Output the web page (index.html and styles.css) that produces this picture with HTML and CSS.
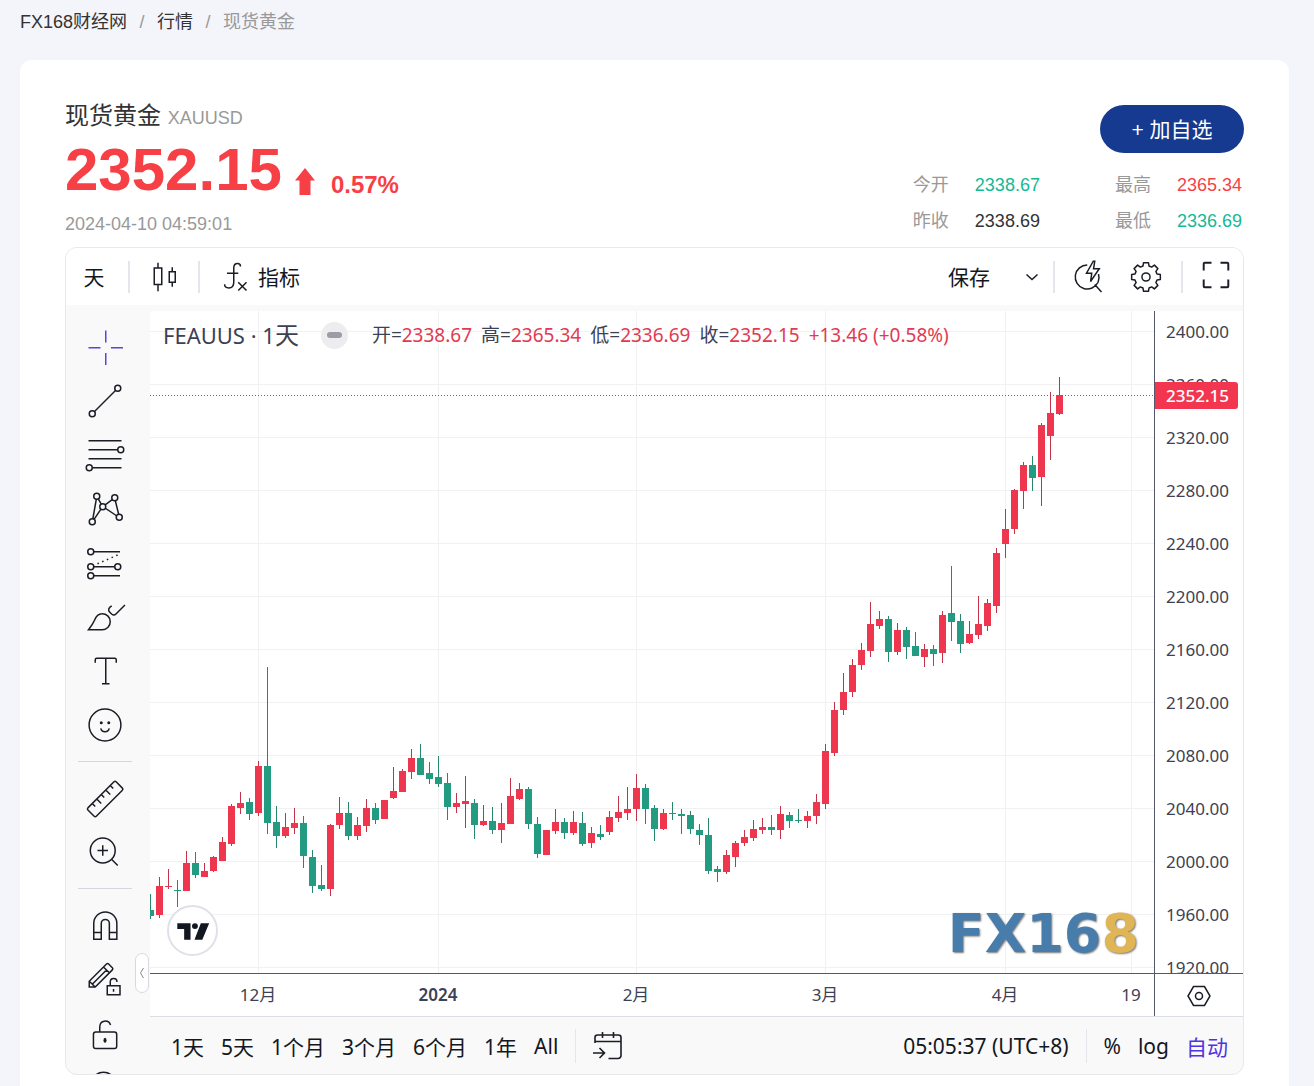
FILE: index.html
```html
<!DOCTYPE html>
<html lang="zh-CN">
<head>
<meta charset="utf-8">
<title>现货黄金 XAUUSD</title>
<link rel="stylesheet" href="styles.css">
</head>
<body>
<div class="page">
  <nav class="crumbs" aria-label="breadcrumb">
    <a href="#">FX168财经网</a><span class="crumb-sep">/</span><a href="#">行情</a><span class="crumb-sep">/</span><span class="crumb-current">现货黄金</span>
  </nav>

  <main class="card">
    <header class="quote">
      <div class="quote-main">
        <h1 class="quote-title">现货黄金 <span class="quote-code">XAUUSD</span></h1>
        <div class="quote-price">
          <span class="price">2352.15</span>
          <svg class="arrow" viewBox="0 0 20 27" aria-hidden="true"><path d="M10 0 20 12.500H15.500V27H4.500V12.500H0Z"/></svg>
          <span class="change">0.57%</span>
        </div>
        <time class="quote-time">2024-04-10 04:59:01</time>
      </div>
      <div class="quote-side">
        <button class="add-btn" type="button">+ 加自选</button>
        <dl class="stats">
          <dt>今开</dt><dd class="down">2338.67</dd><dt class="second">最高</dt><dd class="up">2365.34</dd>
          <dt>昨收</dt><dd>2338.69</dd><dt class="second">最低</dt><dd class="down">2336.69</dd>
        </dl>
      </div>
    </header>

    <section class="widget">
      <div class="topbar">
        <button class="tb-btn interval" type="button">天</button>
        <span class="vline"></span>
        <button class="tb-btn style" type="button" aria-label="K线图"><svg class="icon" viewBox="0 0 28 28"><path d="M7.500 8v11h5V8zM10 8V4.500M10 19v4.500M17.500 10.500v7h4v-7zM19.500 10.500v-3M19.500 17.500v3"/></svg></button>
        <span class="vline"></span>
        <button class="tb-btn indicators" type="button"><svg class="icon" viewBox="0 0 28 28"><path d="M19 7c0-1.300-.8-2-2-2-1.600 0-2.500 1.200-2.500 3v9.500c0 2.500-1 3.800-3.300 3.800-1.900 0-2.800-1-2.800-2.400M10 11.500h7.500M17.500 17.500l5.500 5.500M23 17.500l-5.500 5.500"/></svg><span>指标</span></button>
        <span class="spacer"></span>
        <button class="tb-btn save" type="button">保存</button>
        <button class="tb-btn more" type="button" aria-label="更多"><svg class="chevron" viewBox="0 0 14 8"><path d="M1.500 1.500 7 6.500l5.500-5"/></svg></button>
        <span class="vline"></span>
        <button class="tb-btn quick" type="button" aria-label="快速搜索"><svg class="icon" viewBox="0 0 28 28"><path d="M13.500 6A8 8 0 1 0 20.700 17.500 8 8 0 0 0 21 12M18.500 19l4.500 5M17.500 3.500l-4.500 8h3.500l-.8 5.500 5.800-8.500h-3.800l.8-5z"/></svg></button>
        <button class="tb-btn settings" type="button" aria-label="设置"><svg class="icon" viewBox="0 0 28 28"><g id="gear"></g></svg></button>
        <span class="vline"></span>
        <button class="tb-btn full" type="button" aria-label="全屏"><svg class="icon bold" viewBox="0 0 28 28"><path d="M11 5.800H6.500a.7.700 0 0 0-.7.700V11M17 5.800h4.500a.7.700 0 0 1 .7.700V11M11 22.200H6.500a.7.700 0 0 1-.7-.7V17M17 22.200h4.500a.7.700 0 0 0 .7-.7V17"/></svg></button>
      </div>

      <div class="body">
        <aside class="tools">
          <div class="tool-list">
            <button class="tool active" type="button" aria-label="光标"><svg class="icon" viewBox="0 0 28 28"><path d="M3 14.500h8M18 14.500h8M14.500 3v8M14.500 18v8"/></svg></button>
            <button class="tool" type="button" aria-label="趋势线"><svg class="icon" viewBox="0 0 28 28"><circle cx="5.500" cy="22.500" r="2"/><circle cx="22.500" cy="5.500" r="2"/><path d="M7 21 21 7"/></svg></button>
            <button class="tool" type="button" aria-label="斐波那契"><svg class="icon" viewBox="0 0 28 28"><path d="M3 4.500h22M3 10.500h19.500M3 16.500h22M5.500 22.500H25"/><circle cx="24.500" cy="10.500" r="2"/><circle cx="3.500" cy="22.500" r="2"/></svg></button>
            <button class="tool" type="button" aria-label="形态"><svg class="icon" viewBox="0 0 28 28"><circle cx="5.500" cy="22.500" r="2"/><circle cx="8.500" cy="5.500" r="2"/><circle cx="12.500" cy="12.500" r="2"/><circle cx="20.500" cy="6.500" r="2"/><circle cx="23.500" cy="19.500" r="2"/><path d="M5.900 20.500 8.200 7.500M6.700 20.900l4.600-6.800M9.500 7.200l2 3.500M14.100 11.300l4.700-3.500M20.900 8.500l2.200 9M14.200 13.500l7.500 5"/></svg></button>
            <button class="tool" type="button" aria-label="预测"><svg class="icon" viewBox="0 0 28 28"><circle cx="4.500" cy="6.500" r="2"/><circle cx="4.500" cy="16.500" r="2"/><circle cx="22.500" cy="16.500" r="2"/><circle cx="4.500" cy="22.500" r="2"/><path d="M6.500 6.500H24M6.500 16.500h14M6.500 22.500H24"/><path class="dots" d="M9 14.500l15-6.500"/></svg></button>
            <button class="tool" type="button" aria-label="画笔"><svg class="icon" viewBox="0 0 28 28"><path d="M3 22.500C5 20 6 18.500 7 16.200c1-2.700 2.500-4.400 5-4.400a5.350 5.350 0 0 1 .3 10.700zM27.300 6l-6 6c-.9.900-2 .8-2.900 0l-1.200-1.200c-1.500-1.500-.7-3 1.300-4.200"/></svg></button>
            <button class="tool" type="button" aria-label="文字"><svg class="icon" viewBox="0 0 28 28"><path d="M7.500 8.500v-2a1 1 0 0 1 1-1h12a1 1 0 0 1 1 1v2M14.500 5.500v17M12 22.500h5"/></svg></button>
            <button class="tool" type="button" aria-label="表情"><svg class="icon" viewBox="0 0 28 28"><circle cx="14" cy="14" r="10.600"/><path d="M11.200 16.300c.3 1.400 1.400 2.200 2.800 2.200s2.500-.8 2.800-2.200"/><circle class="fill" cx="11.500" cy="12.500" r="1"/><circle class="fill" cx="16.500" cy="12.500" r="1"/></svg></button>
            <hr class="tool-sep">
            <button class="tool" type="button" aria-label="测量"><svg class="icon" viewBox="0 0 28 28"><path d="M2.600 20.600 20 3.200a1 1 0 0 1 1.400 0l4.200 4.200a1 1 0 0 1 0 1.400L8.200 26.200a1 1 0 0 1-1.400 0L2.600 22a1 1 0 0 1 0-1.400zM5.500 17.700l2 2M8.500 14.700l3 3M11.500 11.700l2 2M14.500 8.700l3 3M17.500 5.700l2 2"/></svg></button>
            <button class="tool" type="button" aria-label="放大"><svg class="icon" viewBox="0 0 28 28"><circle cx="12.500" cy="13" r="8.300"/><path d="M9 13h7M12.500 9.500v7M18.500 19l4 4"/></svg></button>
            <hr class="tool-sep">
            <button class="tool" type="button" aria-label="磁铁"><svg class="icon" viewBox="0 0 28 28"><path d="M6.500 23.500V13a7.700 7.700 0 0 1 15.400 0v10.500h-5V13a2.700 2.700 0 0 0-5.400 0v10.500zM6.500 19h5M16.900 19h5"/></svg></button>
            <button class="tool" type="button" aria-label="绘图模式"><svg class="icon" viewBox="0 0 28 28"><path d="M3.500 19.300v-3.800L15 4a1 1 0 0 1 1.400 0l2.500 2.500a1 1 0 0 1 0 1.400L7.500 19.300zM3.500 15.500l4 3.800M13 6l4 4M5.500 17.500 15 8M15.500 18.500H24v6h-8.500zM17.500 18.500V16c0-3.200 4.500-3.200 4.500 0M19.700 20.700v1.800"/></svg></button>
            <button class="tool" type="button" aria-label="锁定"><svg class="icon" viewBox="0 0 28 28"><rect x="6.300" y="13.300" width="15.500" height="11" rx="1.500"/><path d="M10.500 13.300V10c0-5 6-5 7.200-1.300"/><ellipse class="fill" cx="14" cy="18.800" rx="1" ry="1.700"/></svg></button>
            <button class="tool" type="button" aria-label="隐藏"><svg class="icon" viewBox="0 0 28 28"><circle cx="13" cy="12.500" r="8.300"/></svg></button>
          </div>
          <button class="collapse" type="button" aria-label="收起"><svg viewBox="0 0 6 12"><path d="M4.500 1 1.500 6l3 5"/></svg></button>
        </aside>

        <div class="chart-col">
          <div class="chart">
            <div class="plot">
              <svg class="plot-svg" id="plot" viewBox="0 0 1004 706" preserveAspectRatio="xMaxYMin slice" role="img" aria-label="日线图"></svg>
              <div class="legend">
                <span class="symbol">FEAUUS · 1<span class="unit">天</span></span>
                <span class="badge"></span>
                <span class="ohlc">
                  <span>开=<b>2338.67</b></span><span>高=<b>2365.34</b></span><span>低=<b>2336.69</b></span><span>收=<b>2352.15</b></span><b>+13.46 (+0.58%)</b>
                </span>
              </div>
              <a class="tv-logo" href="#" aria-label="TradingView"><svg viewBox="0 0 52 52"><circle cx="26" cy="26" r="25"/><path d="M10.500 18.500h13.500v17h-6.500V24.500h-7zM34.500 18.500h8.500l-7 17h-8z"/><circle class="dot" cx="28.500" cy="21.500" r="3"/></svg></a>
              <div class="watermark">FX16<span>8</span></div>
            </div>
            <div class="price-axis">
              <ul class="prices">
                <li>2400.00</li><li>2360.00</li><li>2320.00</li><li>2280.00</li><li>2240.00</li><li>2200.00</li><li>2160.00</li><li>2120.00</li><li>2080.00</li><li>2040.00</li><li>2000.00</li><li>1960.00</li><li>1920.00</li>
              </ul>
              <span class="last-tag">2352.15</span>
              <button class="axis-settings" type="button" aria-label="坐标设置"><svg viewBox="0 0 24 22"><path d="M6.500 1.500h11L23 11l-5.500 9.500h-11L1 11z"/><circle cx="12" cy="11" r="3.500"/></svg></button>
            </div>
          </div>

          <div class="bottombar">
            <button type="button">1天</button><button type="button">5天</button><button type="button">1个月</button><button type="button">3个月</button><button type="button">6个月</button><button type="button">1年</button><button type="button">All</button>
            <span class="vline"></span>
            <button type="button" aria-label="前往日期"><svg class="goto" viewBox="0 0 30 30"><path d="M2 12V6.500A2.500 2.500 0 0 1 4.500 4h21A2.500 2.500 0 0 1 28 6.500v18a3 3 0 0 1-3 3H15.500M2 10.500h26M9.500 1v6M20.500 1v6M0 22h11M6.500 17l5 5-5 5"/></svg></button>
            <span class="spacer"></span>
            <button type="button" class="clock">05:05:37 (UTC+8)</button>
            <span class="vline"></span>
            <button type="button">%</button><button type="button">log</button><button type="button" class="auto">自动</button>
          </div>
        </div>
      </div>
    </section>
  </main>
</div>
<script src="chart.js"></script>
</body>
</html>
```
FILE: styles.css
```css
* { box-sizing: border-box; }
body {
  margin: 0;
  background: #f4f4fb;
  color: #333;
  font-family: "Liberation Sans", "Noto Sans CJK SC", sans-serif;
  font-size: 18px;
}
button {
  margin: 0;
  padding: 0;
  border: 0;
  background: none;
  color: inherit;
  font: inherit;
  cursor: pointer;
}
svg { display: block; }
.page {
  display: flex;
  flex-direction: column;
  min-height: 100vh;
  padding: 0 25px 0 20px;
}
.crumbs {
  display: flex;
  align-items: center;
  gap: 12px;
  height: 44px;
  margin-bottom: 16px;
  line-height: 44px;
}
.crumbs a { color: #333; text-decoration: none; }
.crumb-sep, .crumb-current { color: #999; }
.crumb-sep { width: 6px; text-align: center; }
.card {
  flex: 1;
  padding: 40px 45px 11px;
  border-radius: 12px 12px 0 0;
  background: #fff;
}

/* quote header */
.quote {
  display: flex;
  justify-content: space-between;
  height: 147px;
}
.quote-title {
  margin: 0;
  font-size: 24px;
  font-weight: 400;
  line-height: 32px;
}
.quote-code { color: #999; font-size: 18px; }
.quote-price {
  display: flex;
  align-items: flex-end;
  height: 66px;
  color: #f73f46;
  font-weight: 700;
}
.price { font-size: 60px; line-height: 60px; }
.arrow { width: 20px; height: 27px; margin: 0 16px 5px 13px; fill: #f73f46; }
.change { font-size: 24px; line-height: 32px; margin-bottom: -1px; }
.quote-time {
  display: block;
  margin-top: 12px;
  color: #999;
  line-height: 24px;
}
.quote-side {
  display: flex;
  flex-direction: column;
  align-items: flex-end;
  padding-top: 5px;
}
.add-btn {
  width: 144px;
  height: 48px;
  padding-bottom: 3px;
  border-radius: 24px;
  background: #163a8f;
  color: #fff;
  font-size: 21px;
}
.stats {
  display: grid;
  grid-template-columns: auto auto auto auto;
  column-gap: 26px;
  margin: 14px 2px 0 0;
  line-height: 36px;
}
.stats dt { color: #999; }
.stats dt.second { padding-left: 49px; }
.stats dd { margin: 0; }
.stats .up { color: #f73f46; }
.stats .down { color: #15b993; }

/* chart widget */
.widget {
  overflow: hidden;
  border: 1px solid #e8e8ec;
  border-radius: 12px;
  background: #f9f9f9;
  color: #131722;
  font-family: "Noto Sans", "Noto Sans CJK SC", sans-serif;
}
.icon {
  width: 42px;
  height: 42px;
  fill: none;
  stroke: #1b1d26;
  stroke-width: 1;
}
.icon.bold { stroke-width: 1.3; }
.icon .fill { fill: #1b1d26; stroke: none; }
.icon .dots { stroke-dasharray: 1 2.4; }
.vline { width: 2px; height: 32px; background: #e4e6ed; }
.spacer { flex: 1; }
.topbar {
  display: flex;
  align-items: center;
  height: 57px;
  background: #fff;
  font-size: 21px;
}
.tb-btn { display: flex; align-items: center; justify-content: center; height: 56px; }
.interval { width: 56px; margin-right: 6px; padding-bottom: 2px; }
.style { width: 68px; }
.indicators { gap: 4px; margin-left: 12px; }
.indicators span, .save { padding-bottom: 2px; }
.save { width: 66px; margin-right: 8px; }
.more { width: 43px; }
.quick { width: 66px; }
.settings { width: 50px; margin-right: 10px; }
.full { width: 60px; padding-left: 6px; margin-bottom: 4px; }
.chevron { width: 14px; height: 8px; fill: none; stroke: #1b1d26; stroke-width: 1.5; }
.body { display: flex; height: 769px; }
.tools { position: relative; width: 84px; padding: 15px 0 0 12px; }
.tool-list { height: 754px; overflow: hidden; width: 54px; }
.tool { display: flex; align-items: center; justify-content: center; width: 54px; height: 54px; }
.tool.active .icon { stroke: #5745dc; }
.tool-sep { height: 1px; margin: 9px 0; border: 0; background: #d5d7e0; }
.collapse {
  position: absolute;
  right: 1px;
  top: 648px;
  display: flex;
  align-items: center;
  justify-content: center;
  width: 14px;
  height: 40px;
  border: 1px solid #d8dae2;
  border-radius: 7px;
  background: #fff;
}
.collapse svg { width: 6px; height: 12px; fill: none; stroke: #888b96; stroke-width: 1; }
.chart-col { flex: 1; min-width: 0; display: flex; flex-direction: column; padding-top: 6px; }
.chart {
  display: grid;
  grid-template-columns: 1fr 89px;
  height: 706px;
  border-bottom: 1px solid #dcdee5;
  border-radius: 4px 0 0 0;
  background: #fff;
  overflow: hidden;
}
.plot { position: relative; min-width: 0; }
.plot-svg { width: 100%; height: 706px; }
.grid-line { fill: none; stroke: #f1f1f4; }
.axis-line { stroke: #55586c; }
.up-body { fill: #ee364e; }
.down-body { fill: #229b81; }
.up-wick { fill: #c23349; }
.down-wick { fill: #27866c; }
.last-line { fill: none; stroke: #e0364e; stroke-dasharray: 1 2; }
.time-label { fill: #3d4154; font-size: 17px; text-anchor: middle; }
.time-label.year { font-weight: 600; }
.legend {
  position: absolute;
  left: 13px;
  top: 8px;
  display: flex;
  align-items: center;
  height: 32px;
  color: #3d4154;
  line-height: 32px;
  white-space: nowrap;
}
.symbol { font-size: 22px; }
.unit { font-size: 24px; }
.badge {
  display: flex;
  align-items: center;
  justify-content: center;
  width: 27px;
  height: 27px;
  margin: 0 24px 0 22px;
  border-radius: 50%;
  background: #ededf0;
}
.badge::before { content: ""; width: 15px; height: 6px; border-radius: 3px; background: #9a9ca6; }
.ohlc { display: flex; align-items: baseline; gap: 9px; font-size: 19px; }
.ohlc b { color: #e23a52; font-weight: 400; }
.tv-logo { position: absolute; left: 17px; bottom: 61px; }
.tv-logo svg { width: 51px; height: 51px; fill: #131722; }
.tv-logo circle { fill: #fff; stroke: #e0e0e9; stroke-width: 2; }
.tv-logo .dot { fill: #131722; stroke: none; }
.watermark {
  position: absolute;
  right: 15px;
  bottom: 53px;
  color: #487dab;
  font: 700 54px/60px "DejaVu Sans", sans-serif;
  text-shadow: 1px 1px 2px #777;
}
.watermark span { color: #dfb556; }
.price-axis {
  position: relative;
  border-left: 1px solid #55586c;
  color: #3d4154;
}
.prices {
  height: 663px;
  margin: 0;
  padding: 0;
  overflow: hidden;
  border-bottom: 1px solid #55586c;
  font-size: 17px;
  list-style: none;
}
.prices li { height: 53px; padding-left: 11px; line-height: 53px; }
.prices li:first-child { margin-top: -6px; }
.last-tag {
  position: absolute;
  left: 0;
  top: 71px;
  width: 83px;
  height: 27px;
  padding-left: 11px;
  border-radius: 0 3px 3px 0;
  background: #f23650;
  color: #fff;
  font-size: 17px;
  font-weight: 500;
  line-height: 27px;
}
.axis-settings { display: flex; align-items: center; justify-content: center; width: 88px; height: 43px; }
.axis-settings svg { width: 24px; height: 22px; fill: none; stroke: #1b1d26; stroke-width: 1.5; }
.bottombar {
  flex: 1;
  display: flex;
  align-items: center;
  gap: 17px;
  padding: 0 15px 0 21px;
  color: #131722;
  font-size: 21px;
  white-space: nowrap;
}
.bottombar .vline { width: 1px; height: 34px; }
.goto { width: 30px; height: 30px; fill: none; stroke: #1b1d26; stroke-width: 1.6; }
.auto { color: #5033e0; }
```
FILE: chart.js
```js
// Candles, one per trading day: [direction, high, bodyTop, bodyBottom, low],
// as vertical positions on the price scale; OFFSET is the top of the plot.
const OFFSET = 311;
const STEP = 9;
const candles = [
  ["d",894,910,916,919],["u",877,886,915,918],["u",869,886,887,889],["d",880,890,891,907],["u",851,863,891,891],
  ["d",852,863,875,878],["u",863,871,877,877],["u",856,857,871,872],["u",837,842,861,861],["u",804,806,844,846],
  ["u",792,803,808,814],["d",798,802,814,820],["u",761,766,813,816],["d",667,766,823,834],["d",806,822,836,848],
  ["u",813,827,836,838],["u",808,823,828,834],["d",816,823,856,868],["d",850,857,886,893],["d",865,885,889,891],
  ["u",824,825,889,896],["u",797,813,825,829],["d",802,813,836,840],["u",817,825,836,840],["u",799,808,826,832],
  ["d",803,808,820,824],["u",800,800,819,819],["u",767,791,798,799],["u",769,771,792,792],["u",749,758,772,779],
  ["d",744,758,775,775],["d",762,773,779,784],["d",756,777,784,787],["d",773,783,807,820],["u",793,803,807,813],
  ["u",776,801,804,828],["d",799,803,825,839],["u",805,821,825,826],["d",807,821,830,834],["u",803,823,830,843],
  ["u",778,796,824,824],["u",783,789,799,800],["d",787,789,824,829],["d",817,824,854,858],["u",830,830,855,855],
  ["u",809,822,831,834],["d",818,822,833,839],["u",811,822,833,835],["d",812,823,844,846],["u",827,833,843,848],
  ["d",825,834,837,840],["u",811,817,832,835],["u",796,812,818,822],["u",787,809,813,820],["u",774,788,809,821],
  ["d",784,788,809,824],["d",805,808,829,841],["u",809,813,829,830],["d",802,813,814,820],["d",809,814,816,834],
  ["d",811,815,829,834],["d",824,830,835,845],["d",818,835,871,874],["d",866,869,872,882],["u",850,855,872,874],
  ["u",841,843,857,867],["u",830,837,843,846],["u",820,829,838,841],["u",818,827,830,834],["d",815,827,830,835],
  ["u",806,814,830,839],["d",812,815,821,828],["d",809,820,821,823],["u",811,816,821,828],["u",794,802,816,824],
  ["u",744,751,804,809],["u",702,710,753,756],["u",673,692,710,715],["u",659,665,692,697],["u",643,650,665,670],
  ["u",602,624,651,657],["u",611,619,626,629],["d",616,619,652,662],["u",623,630,652,655],["d",627,630,647,659],
  ["d",632,646,656,656],["u",644,649,657,667],["d",645,649,654,666],["u",611,615,653,663],["d",566,613,622,641],
  ["d",614,621,644,653],["u",621,634,643,644],["u",596,624,635,639],["u",599,603,626,631],["u",548,553,606,613],
  ["u",509,529,544,558],["u",489,490,529,534],["u",462,465,491,509],["d",456,465,478,491],["u",423,425,477,506],
  ["u",392,413,436,460],["u",377,395,414,415]
];
const times = [[108,"12月"],[288,"2024"],[486,"2月"],[675,"3月"],[855,"4月"],[981,"19"]];

let out = "";
for (let i = 0; i < 13; i++) out += `<path class="grid-line" d="M0 ${20.5 + i * 53}H1004"/>`;
for (const [x] of times) out += `<path class="grid-line" d="M${x + 0.5} 0V662"/>`;
out += '<path class="last-line" d="M0 84.5H1004"/>';
candles.forEach(([dir, high, top, bottom, low], i) => {
  const x = i * STEP;
  const kind = dir === "u" ? "up" : "down";
  out += `<rect class="${kind}-wick" x="${x}" y="${high - OFFSET}" width="1" height="${low - high}"/>`;
  out += `<rect class="${kind}-body" x="${x - 3}" y="${top - OFFSET}" width="7" height="${bottom - top}"/>`;
});
out += '<path class="axis-line" d="M0 662.5H1004"/>';
for (const [x, label] of times) {
  out += `<text class="time-label${label === "2024" ? " year" : ""}" x="${x}" y="690">${label}</text>`;
}
document.getElementById("plot").innerHTML = out;

// Settings gear: eight teeth around a hub
const teeth = 8;
let d = "";
for (let i = 0; i < teeth; i++) {
  const a = (i * 2 * Math.PI) / teeth - Math.PI / 2;
  [[-0.27, 7.6], [-0.17, 9.7], [0.17, 9.7], [0.27, 7.6]].forEach(([da, r], j) => {
    const px = (14 + r * Math.cos(a + da)).toFixed(2);
    const py = (14 + r * Math.sin(a + da)).toFixed(2);
    d += `${i || j ? "L" : "M"}${px} ${py}`;
  });
}
document.getElementById("gear").innerHTML = `<path stroke-linejoin="round" d="${d}Z"/><circle cx="14" cy="14" r="2.7"/>`;
```
